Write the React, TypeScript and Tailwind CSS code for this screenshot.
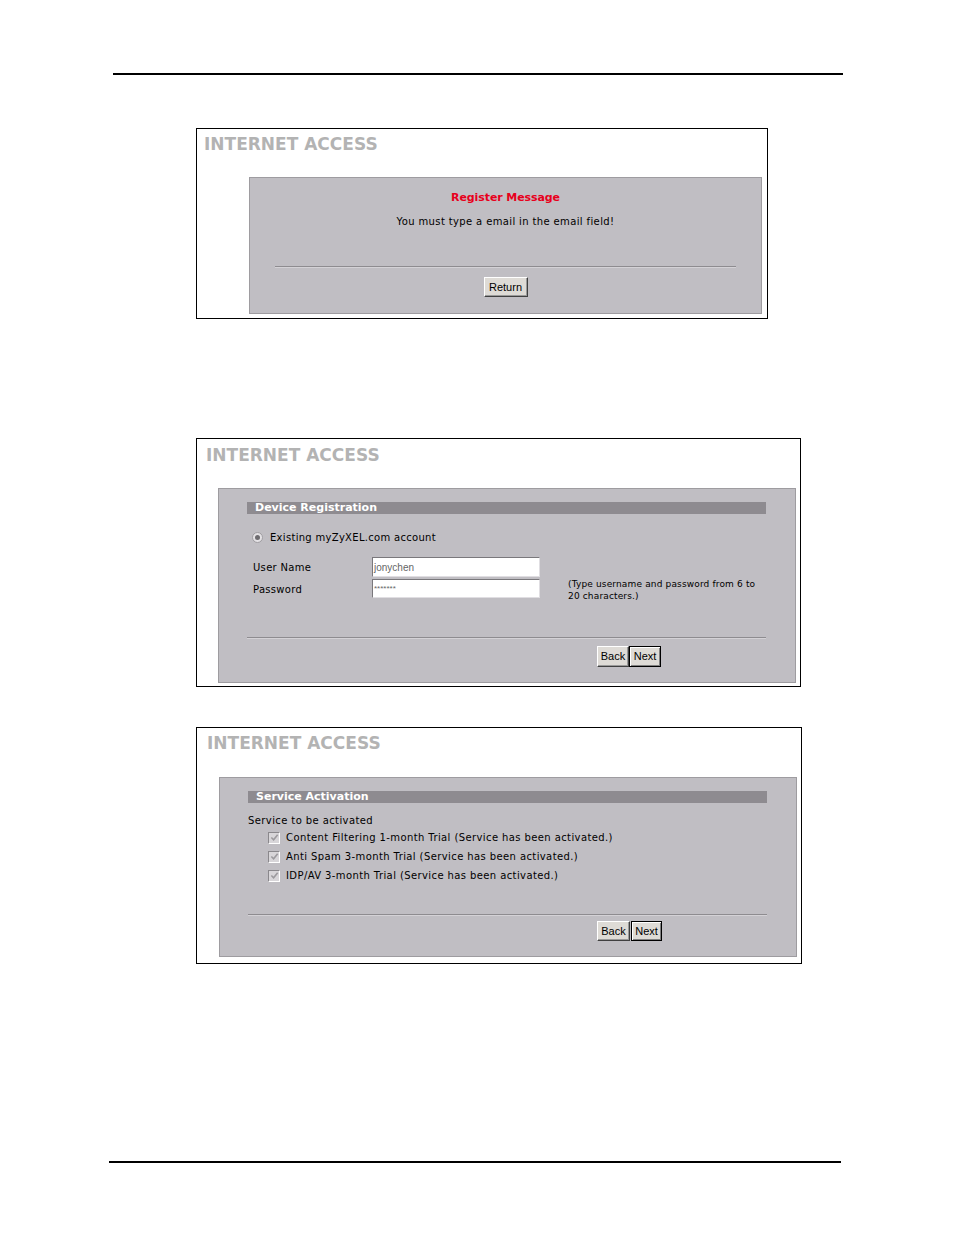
const ui = { fontFamily: "'DejaVu Sans', Verdana, sans-serif" };
const win = { fontFamily: "'Liberation Sans', Arial, sans-serif" };

function Title({ className }: { className: string }) {
  return (
    <div
      className={`text-[17px] leading-[20px] font-bold text-[#b3b3b3] ${className}`}
      style={ui}
    >
      INTERNET ACCESS
    </div>
  );
}

function Btn({ label, focus = false, w }: { label: string; focus?: boolean; w: string }) {
  return (
    <button
      className={`${w} h-[20px] flex items-center justify-center text-[11px] text-black bg-[#dedbd6] border ${
        focus
          ? 'border-black shadow-[inset_1px_1px_0_#fff,inset_-1px_-1px_0_#808080]'
          : 'border-t-white border-l-white border-r-[#404040] border-b-[#404040] shadow-[inset_-1px_-1px_0_#9a9a9a]'
      }`}
      style={win}
    >
      {label}
    </button>
  );
}

function Divider({ className }: { className: string }) {
  return <div className={`h-[2px] border-t border-[#8e8c90] border-b border-b-[#d4d2d6] ${className}`} />;
}

function Header({ text }: { text: string }) {
  return (
    <div
      className="h-[12px] bg-[#8e8b90] pl-[8px] flex items-center text-[11px] font-bold text-white"
      style={ui}
    >
      {text}
    </div>
  );
}

function Check({ label }: { label: string }) {
  return (
    <div className="flex items-center h-[19px]">
      <span className="w-[12px] h-[12px] ml-[20px] bg-[#d8d6d9] border border-t-[#8a888c] border-l-[#8a888c] border-r-white border-b-white flex items-center justify-center">
        <svg viewBox="0 0 10 10" className="w-[9px] h-[9px]">
          <path d="M1.5 5 L4 7.5 L8.5 2" fill="none" stroke="#9c9a9e" strokeWidth="1.8" />
        </svg>
      </span>
      <span className="ml-[6px]">{label}</span>
    </div>
  );
}

export default function App() {
  return (
    <div className="w-[954px] h-[1235px] bg-white flex flex-col pt-[73px]">
      <div className="ml-[113px] w-[730px] h-[2px] bg-black" />

      {/* Register message */}
      <div className="ml-[196px] mt-[53px] w-[572px] h-[191px] border border-black flex flex-col">
        <Title className="pl-[7px] pt-[5px]" />
        <div className="ml-[52px] mt-[23px] w-[513px] h-[137px] bg-[#c0bec3] border border-[#9e9ca0] flex flex-col items-center" style={ui}>
          <div className="mt-[13px] text-[11px] leading-[14px] font-bold text-[#e8001c] tracking-[-0.1px]">Register Message</div>
          <div className="mt-[10px] text-[10px] leading-[14px] text-black tracking-[0.37px]">You must type a email in the email field!</div>
          <Divider className="mt-[37px] w-[461px]" />
          <div className="mt-[9px]">
            <Btn label="Return" w="w-[44px]" />
          </div>
        </div>
      </div>

      {/* Device registration */}
      <div className="ml-[196px] mt-[119px] w-[605px] h-[249px] border border-black flex flex-col">
        <Title className="pl-[9px] pt-[6px]" />
        <div className="ml-[21px] mt-[23px] w-[578px] h-[195px] bg-[#c0bec3] border border-[#9e9ca0] flex flex-col text-[10px] text-black" style={ui}>
          <div className="mt-[13px] ml-[28px] w-[519px]">
            <Header text="Device Registration" />
          </div>
          <div className="mt-[17px] ml-[33px] flex items-center h-[12px] tracking-[0.3px]">
            <span className="w-[11px] h-[11px] rounded-full bg-[#e4e2e5] border border-[#a09ea2] flex items-center justify-center">
              <span className="w-[5px] h-[5px] rounded-full bg-[#6e6c70]" />
            </span>
            <span className="ml-[7px]">Existing myZyXEL.com account</span>
          </div>
          <div className="mt-[14px] ml-[34px] flex">
            <div className="w-[119px] flex flex-col tracking-[0.3px]">
              <div className="h-[20px] flex items-center">User Name</div>
              <div className="mt-[3px] h-[19px] flex items-center">Password</div>
            </div>
            <div className="flex flex-col">
              <div className="w-[168px] h-[20px] bg-white border border-t-[#7a787c] border-l-[#7a787c] border-r-[#e0dee2] border-b-[#e0dee2] pl-[1px] flex items-center text-[10px] text-[#666]" style={win}>
                jonychen
              </div>
              <div className="mt-[2px] w-[168px] h-[19px] bg-white border border-t-[#7a787c] border-l-[#7a787c] border-r-[#e0dee2] border-b-[#e0dee2] pl-[1px] flex items-center text-[8px] text-[#666]" style={win}>
                *******
              </div>
            </div>
            <div className="ml-[28px] mt-[21px] w-[195px] text-[9px] leading-[12px] tracking-[0.15px]">
              (Type username and password from 6 to 20 characters.)
            </div>
          </div>
          <Divider className="mt-[35px] ml-[28px] w-[519px]" />
          <div className="mt-[7px] ml-[378px] flex">
            <Btn label="Back" w="w-[32px] h-[21px]" />
            <Btn label="Next" focus w="w-[32px] h-[21px]" />
          </div>
        </div>
      </div>

      {/* Service activation */}
      <div className="ml-[196px] mt-[40px] w-[606px] h-[237px] border border-black flex flex-col">
        <Title className="pl-[10px] pt-[5px]" />
        <div className="ml-[22px] mt-[24px] w-[578px] h-[180px] bg-[#c0bec3] border border-[#9e9ca0] flex flex-col text-[10px] text-black tracking-[0.4px]" style={ui}>
          <div className="mt-[13px] ml-[28px] w-[519px] tracking-normal">
            <Header text="Service Activation" />
          </div>
          <div className="ml-[28px] mt-[10px] flex flex-col">
            <div className="h-[14px] flex items-center">Service to be activated</div>
            <div className="mt-[1px] flex flex-col">
              <Check label="Content Filtering 1-month Trial (Service has been activated.)" />
              <Check label="Anti Spam 3-month Trial (Service has been activated.)" />
              <Check label="IDP/AV 3-month Trial (Service has been activated.)" />
            </div>
          </div>
          <Divider className="mt-[29px] ml-[28px] w-[519px]" />
          <div className="mt-[5px] ml-[377px] flex tracking-normal">
            <Btn label="Back" w="w-[33px]" />
            <div className="ml-[1px]">
              <Btn label="Next" focus w="w-[31px]" />
            </div>
          </div>
        </div>
      </div>

      <div className="ml-[109px] mt-[197px] w-[732px] h-[2px] bg-black" />
    </div>
  );
}
